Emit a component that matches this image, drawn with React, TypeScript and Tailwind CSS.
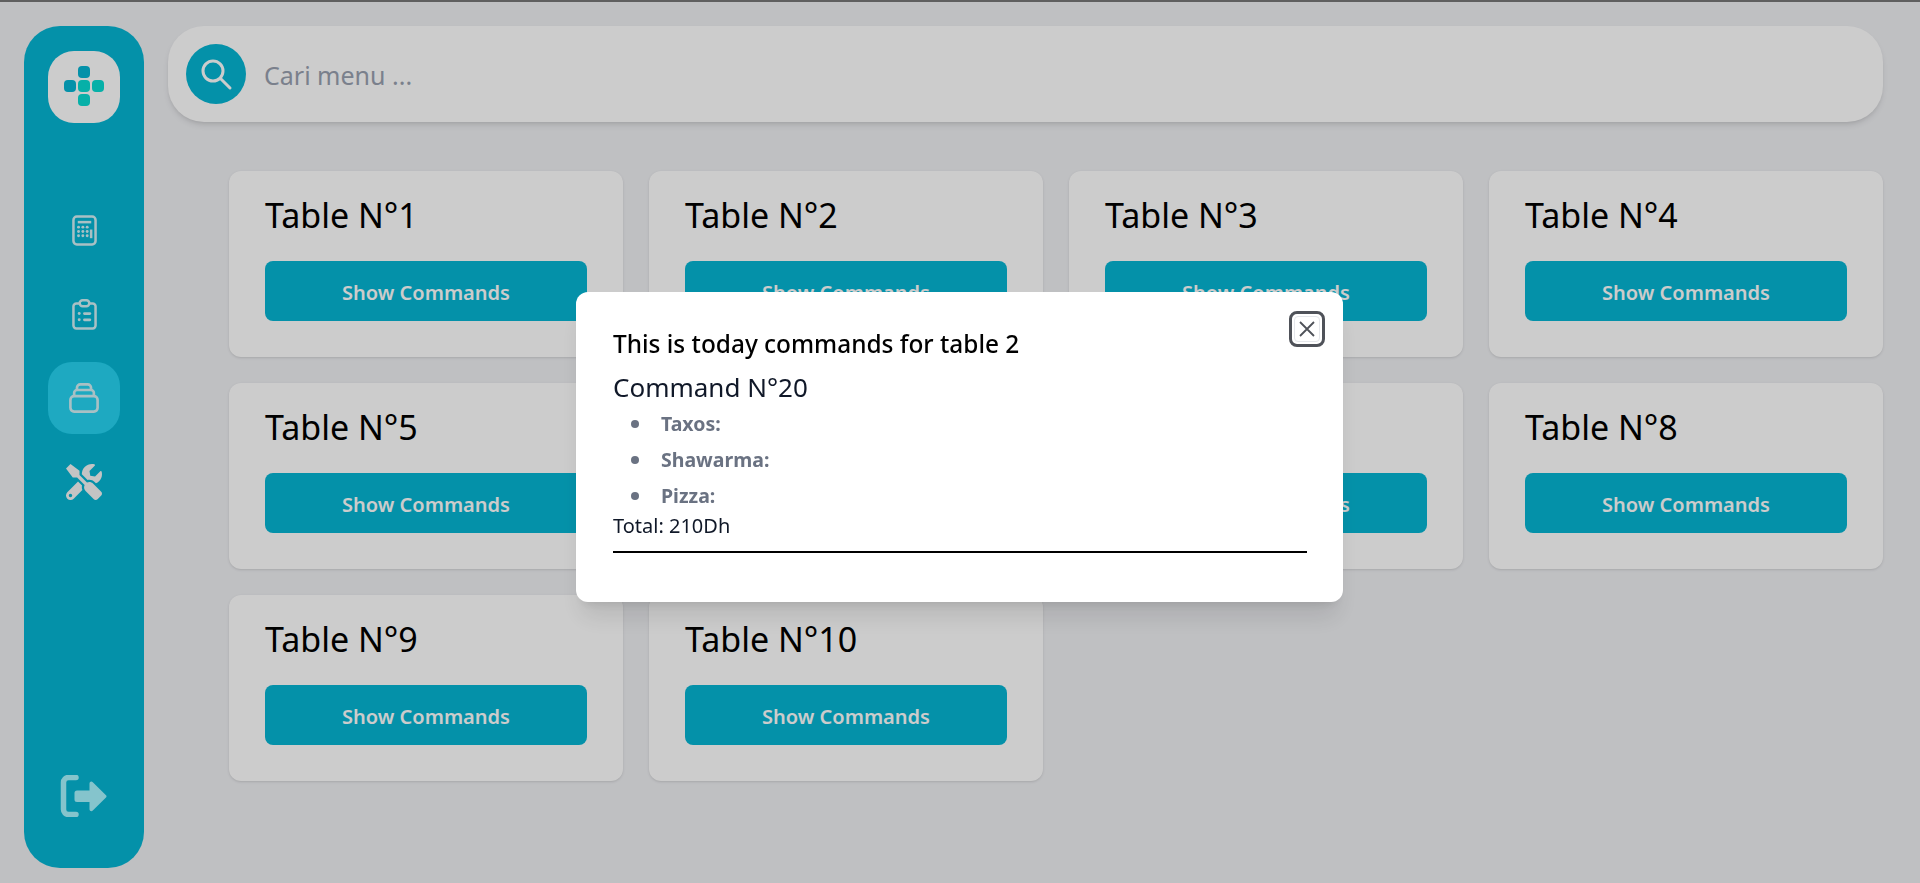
import React from "react";
import { FaTools } from "react-icons/fa";

const tables = [1, 2, 3, 4, 5, 6, 7, 8, 9, 10];
const items = ["Taxos:", "Shawarma:", "Pizza:"];

function Calc() {
  return (
    <svg width="25" height="31" viewBox="0 0 26 32" fill="none">
      <rect x="1.5" y="1.5" width="23" height="29" rx="3.500" stroke="currentColor" strokeWidth="2.600" />
      <rect x="6" y="6" width="14" height="2.600" fill="currentColor" />
      {[6.8, 11.3, 15.8].map((x) =>
        [12.5, 17, 21.5].map((y) => <circle key={`${x}-${y}`} cx={x} cy={y} r="1.500" fill="currentColor" />)
      )}
      <rect x="18.6" y="15" width="2.600" height="9" fill="currentColor" />
    </svg>
  );
}
function Clip() {
  return (
    <svg width="25" height="31" viewBox="0 0 26 32" fill="none">
      <path d="M8 4.5H4.5a3 3 0 0 0-3 3V27.500a3 3 0 0 0 3 3h17a3 3 0 0 0 3-3V7.500a3 3 0 0 0-3-3H18" stroke="currentColor" strokeWidth="2.600" />
      <rect x="8" y="1.300" width="10" height="6" rx="3" stroke="currentColor" strokeWidth="2.600" />
      <circle cx="7.500" cy="15" r="1.500" fill="currentColor" />
      <circle cx="7.500" cy="21.500" r="1.500" fill="currentColor" />
      <rect x="11.500" y="13.600" width="8.500" height="2.800" rx="1.400" fill="currentColor" />
      <rect x="11.500" y="20.100" width="8.500" height="2.800" rx="1.400" fill="currentColor" />
    </svg>
  );
}
function Box() {
  return (
    <svg width="30" height="30" viewBox="0 0 32 32" fill="none">
      <rect x="1.500" y="14" width="29" height="16.500" rx="4" stroke="currentColor" strokeWidth="2.800" />
      <path d="M5.500 14v-3.500a3 3 0 0 1 3-3h15a3 3 0 0 1 3 3V14" stroke="currentColor" strokeWidth="2.800" />
      <path d="M8.500 7.500V5a3.500 3.500 0 0 1 3.500-3.500h8A3.500 3.500 0 0 1 23.500 5v2.500" stroke="currentColor" strokeWidth="2.800" />
    </svg>
  );
}
function Logout() {
  return (
    <svg width="48" height="42" viewBox="0 0 48 42" fill="none">
      <path d="M16 2.500H8.500a5 5 0 0 0-5 5v27a5 5 0 0 0 5 5H16" stroke="#a7f5ff" strokeWidth="5.500" strokeLinecap="round" />
      <path d="M17 15.500h12.500V8.500c0-1.800 2-2.600 3.300-1.300l13.200 13c.7.700.7 1.700 0 2.400l-13.200 13c-1.300 1.300-3.300.4-3.300-1.300V27H17a2.500 2.500 0 0 1-2.500-2.500V18a2.500 2.500 0 0 1 2.500-2.500Z" fill="#a7f5ff" />
    </svg>
  );
}
function Logo() {
  return (
    <svg width="44" height="42" viewBox="0 0 44 42">
      <rect x="16" y="0" width="12" height="12" rx="4" fill="#06b6d4" />
      <rect x="2" y="14" width="12" height="12" rx="4" fill="#06b6d4" />
      <rect x="16" y="14" width="12" height="12" rx="4" fill="#08dcd2" />
      <rect x="30" y="14" width="12" height="12" rx="4" fill="#08dcd2" />
      <rect x="16" y="28" width="12" height="12" rx="4" fill="#08dcd2" />
    </svg>
  );
}

export default function App() {
  return (
    <div className="h-screen overflow-hidden bg-[#eff0f3] font-['Noto_Sans','Open_Sans',sans-serif]">
      <div className="h-[2px] bg-[#777777]" />
      <div className="flex gap-6 pl-6 pr-[37px] pt-6">
        <aside className="flex h-[842px] w-[120px] shrink-0 flex-col items-center rounded-[36px] bg-[#06b6d4] pt-[25px] pb-[51px] text-[#d4f1f6]">
          <div className="flex h-[72px] w-[72px] items-center justify-center rounded-[26px] bg-white">
            <Logo />
          </div>
          <nav className="mt-[71px] flex flex-col gap-3">
            <div className="flex h-[72px] w-[72px] items-center justify-center"><Calc /></div>
            <div className="flex h-[72px] w-[72px] items-center justify-center"><Clip /></div>
            <div className="flex h-[72px] w-[72px] items-center justify-center rounded-3xl bg-[#26d4f2]"><Box /></div>
            <div className="flex h-[72px] w-[72px] items-center justify-center text-[#f5f5f5]"><FaTools size={36} /></div>
          </nav>
          <div className="mt-auto"><Logout /></div>
        </aside>
        <main className="min-w-0 flex-1">
          <div className="flex h-24 items-center gap-[18px] rounded-[36px] bg-white pl-[18px] shadow-md">
            <div className="flex h-[60px] w-[60px] items-center justify-center rounded-full bg-[#06b6d4] text-white">
              <svg width="34" height="34" viewBox="0 0 34 34" fill="none" stroke="currentColor" strokeWidth="3" strokeLinecap="round">
                <circle cx="14" cy="14" r="10" />
                <path d="M22 22l9 9" />
              </svg>
            </div>
            <span className="relative top-[2px] text-[25px] text-gray-400">Cari menu ...</span>
          </div>
          <div className="mt-[49px] ml-[61px] grid grid-cols-4 gap-[26px]">
            {tables.map((n) => (
              <div key={n} className="h-[186px] rounded-xl bg-white px-9 pt-5 shadow">
                <h2 className="text-[34px] leading-[48px] font-normal text-black">Table N°{n}</h2>
                <button className="mt-[22px] h-[60px] w-full rounded-lg bg-[#06b6d4] pt-[3px] text-[20px] font-semibold text-white">Show Commands</button>
              </div>
            ))}
          </div>
        </main>
      </div>
      <div className="fixed inset-0 bg-black/20" />
      <div className="fixed top-[292px] left-[576px] h-[310px] w-[767px] rounded-xl bg-white pt-9 pr-[36px] pl-[37px] shadow-xl">
        <button className="absolute top-[19px] right-[18px] flex h-9 w-9 items-center justify-center rounded-lg border-[3px] border-[#4f5259] text-[#4f5259]">
          <span className="absolute inset-[2px] rounded border border-gray-200" />
          <svg width="18" height="18" viewBox="0 0 18 18" fill="none" stroke="currentColor" strokeWidth="1.800">
            <path d="M2 2l14 14M16 2L2 16" />
          </svg>
        </button>
        <h3 className="text-[24.400px] leading-[32px] font-medium text-black">This is today commands for table 2</h3>
        <h4 className="mt-[9px] text-[26px] leading-9 text-gray-900">Command N°20</h4>
        <ul className="mt-[1px] text-gray-500">
          {items.map((item) => (
            <li key={item} className="flex h-9 items-center gap-[22px] pl-[18px] text-[19.500px] leading-9 font-bold">
              <span className="h-2 w-2 rounded-full bg-gray-500" />
              {item}
            </li>
          ))}
        </ul>
        <p className="mt-[-1px] text-[20px] leading-[26px] text-gray-900">Total: 210Dh</p>
        <hr className="mt-[12px] border-t-2 border-black" />
      </div>
    </div>
  );
}
